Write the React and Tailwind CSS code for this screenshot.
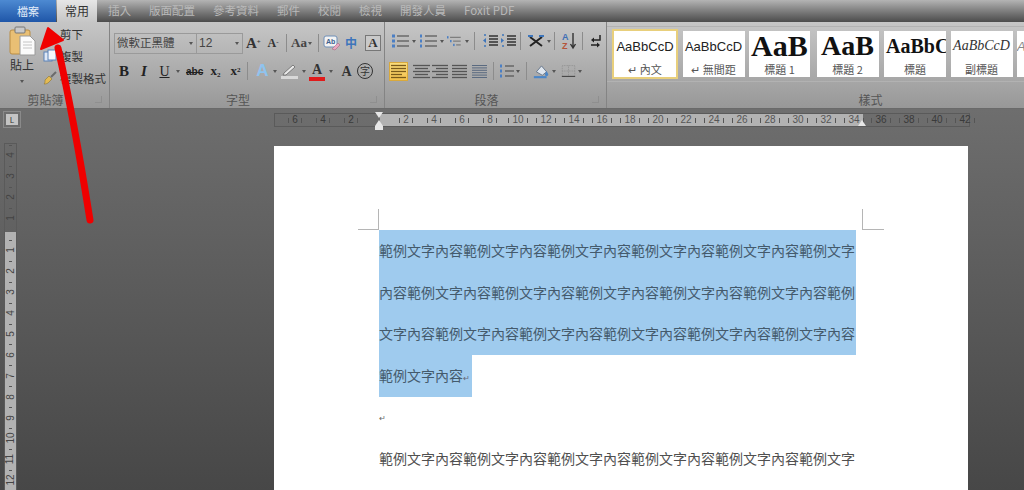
import React from 'react';

const cjk = { fontFamily: '"Noto Sans CJK TC", "Liberation Sans", sans-serif' };

const otherTabs = ['插入', '版面配置', '參考資料', '郵件', '校閱', '檢視', '開發人員', 'Foxit PDF'];
const rulerLeft = [6, 4, 2];
const rulerBody = [2, 4, 6, 8, 10, 12, 14, 16, 18, 20, 22, 24, 26, 28, 30, 32, 34];
const rulerRight = [36, 38, 40, 42];
const vRulerTop = [4, 3, 2, 1];
const vRulerBody = [1, 2, 3, 4, 5, 6, 7, 8, 9, 10, 11, 12];

const pageLines = [
  '範例文字內容範例文字內容範例文字內容範例文字內容範例文字內容範例文字',
  '內容範例文字內容範例文字內容範例文字內容範例文字內容範例文字內容範例',
  '文字內容範例文字內容範例文字內容範例文字內容範例文字內容範例文字內容',
];

// small drop arrow used by most ribbon buttons
const Drop = () => <span className="block w-0 h-0 border-x-[2px] border-x-transparent border-t-[3px] border-t-[#555] shrink-0" />;
const Sep = () => <span className="block w-px h-[18px] bg-[#8c8c8c] shrink-0" />;

// text lines icon: rows = [[x1, x2], ...]
const Lines = ({ w = 18, rows, color = '#444', stroke = 1.4 }) => (
  <svg width={w} height="15" viewBox={`0 0 ${w} 15`} className="shrink-0">
    {rows.map((r, i) => (
      <line key={i} x1={r[0]} x2={r[1]} y1={1.5 + i * (12 / (rows.length - 1))} y2={1.5 + i * (12 / (rows.length - 1))} stroke={color} strokeWidth={stroke} />
    ))}
  </svg>
);

const ListIcon = ({ w = 18, numbered }) => (
  <svg width={w} height="16" viewBox={`0 0 ${w} 16`} className="shrink-0">
    {[3, 8, 13].map((y) => (
      <g key={y}>
        <rect x="1" y={y - 1.5} width={numbered ? 2 : 3} height="3" fill="#4b7fc4" />
        <line x1="6" x2={w} y1={y} y2={y} stroke="#555" strokeWidth="1.2" />
      </g>
    ))}
  </svg>
);

const PasteIcon = () => (
  <svg width="27" height="30" viewBox="0 0 27 30" className="shrink-0">
    <rect x="1" y="4" width="20" height="24" rx="2" fill="#e9bf74" stroke="#b98d45" />
    <rect x="6" y="1" width="10" height="6" rx="1" fill="#c9c9c9" stroke="#777" />
    <path d="M11 10h10l5 5v14H11z" fill="#fbfbfb" stroke="#9a9a9a" />
    <path d="M14 16h9M14 19h9M14 22h9" stroke="#c4c4c4" />
  </svg>
);

const CopyIcon = () => (
  <svg width="14" height="14" viewBox="0 0 14 14" className="shrink-0">
    <rect x="1" y="3" width="8" height="9" fill="#dfe8f5" stroke="#5a82b8" />
    <rect x="5" y="1" width="8" height="10" fill="#f3f6fb" stroke="#5a82b8" />
  </svg>
);

const BrushIcon = () => (
  <svg width="14" height="14" viewBox="0 0 14 14" className="shrink-0">
    <path d="M8 6l5-5" stroke="#6b6b6b" strokeWidth="2" />
    <path d="M2 9l4-4 3 3-4 4c-2 1-3 1-4 1 1-1 1-2 1-4z" fill="#e4bb54" stroke="#8c7330" strokeWidth="0.6" />
  </svg>
);

const ShadingIcon = () => (
  <svg width="17" height="18" viewBox="0 0 20 18" className="shrink-0">
    <path d="M4 10l6-7 6 7-5 4z" fill="#dfe6ee" stroke="#5d6f86" />
    <path d="M16 9c1 2 2 3 2 4a2 2 0 0 1-4 0c0-1 1-2 2-4z" fill="#4a86c8" />
    <rect x="1" y="15" width="15" height="2.5" fill="#4a86c8" />
  </svg>
);

const BorderIcon = () => (
  <svg width="15" height="16" viewBox="0 0 18 16" className="shrink-0">
    <path d="M1.5 1.5h15v13h-15zM9 1.5v13M1.5 8h15" fill="none" stroke="#8d8d8d" strokeDasharray="1 1" />
    <path d="M1 14.5h16" stroke="#444" strokeWidth="1.3" />
  </svg>
);

const SortIcon = () => (
  <svg width="16" height="20" viewBox="0 0 16 20" className="shrink-0">
    <text x="1" y="9" fontSize="9" fontWeight="700" fill="#3f6fb5" fontFamily="Liberation Sans, sans-serif">A</text>
    <text x="1" y="18" fontSize="9" fontWeight="700" fill="#b5553a" fontFamily="Liberation Sans, sans-serif">Z</text>
    <path d="M12 2v14M9.5 13l2.5 4 2.5-4" fill="none" stroke="#333" strokeWidth="1.4" />
  </svg>
);

const MarksIcon = () => (
  <svg width="12" height="16" viewBox="0 0 12 16" className="shrink-0">
    <path d="M10 2v5H3" fill="none" stroke="#222" strokeWidth="1.5" />
    <path d="M4 4.5L1 7l3 2.5z" fill="#222" />
    <path d="M1 12h8" stroke="#222" strokeWidth="1.5" />
    <path d="M7 9.5l3 2.5-3 2.5z" fill="#222" />
  </svg>
);

const AsianIcon = () => (
  <svg width="20" height="16" viewBox="0 0 20 16" className="shrink-0">
    <path d="M4 4l12 9M16 4L4 13" stroke="#222" strokeWidth="2" />
    <path d="M2 3h5M13 3h5" stroke="#3d75bb" strokeWidth="2" />
  </svg>
);

const IndentIcon = ({ flip }) => (
  <svg width="15" height="14" viewBox="0 0 15 14" className="shrink-0">
    <path d="M6 2h9M6 5h9M6 8h9M6 11h9" stroke="#333" strokeWidth="1.4" />
    <path d={flip ? 'M0 6.5l3-2.5v5z' : 'M3 6.5L0 4v5z'} fill="#3d75bb" />
    <path d="M1 1h2M1 12h2" stroke="#3d75bb" strokeWidth="1.4" />
  </svg>
);

const MultiIcon = () => (
  <svg width="16" height="13" viewBox="0 0 21 16" className="shrink-0">
    <rect x="0" y="1" width="2" height="3" fill="#4b7fc4" />
    <path d="M4 2.5h14" stroke="#555" />
    <rect x="4" y="6" width="2" height="3" fill="#4b7fc4" />
    <path d="M8 7.5h10" stroke="#555" />
    <rect x="8" y="11" width="2" height="3" fill="#4b7fc4" />
    <path d="M12 12.5h6" stroke="#555" />
  </svg>
);

const ClearIcon = () => (
  <svg width="18" height="16" viewBox="0 0 18 16" className="shrink-0">
    <rect x="1" y="1" width="13" height="11" rx="2" fill="#f2f2f2" stroke="#6f8fb8" />
    <text x="3" y="9" fontSize="7" fontWeight="700" fill="#3d5f8f" fontFamily="Liberation Sans, sans-serif">Ab</text>
    <path d="M9 14l6-6 2 2-5 5z" fill="#e9a6c0" stroke="#a56a84" strokeWidth="0.6" />
  </svg>
);

const HighlightIcon = () => (
  <svg width="17" height="16" viewBox="0 0 17 16" className="shrink-0">
    <path d="M3 10l9-8 2 2-9 8-3 0z" fill="#e8e8e8" stroke="#666" strokeWidth="0.8" />
    <rect x="0" y="13" width="17" height="3" fill="#d8d8d8" />
  </svg>
);

const CircledIcon = () => (
  <span className="block w-[16px] h-[16px] rounded-full border border-[#333] text-[10px] leading-[14px] text-center text-[#333] shrink-0" style={cjk}>字</span>
);

const StyleTile = ({ label, sample, className, sampleClass, style }) => (
  <div className={`flex flex-col items-center overflow-hidden bg-white shrink-0 ${className}`}>
    <div className={`h-[30px] w-full flex items-center justify-center whitespace-nowrap overflow-hidden leading-none ${sampleClass}`} style={style}>{sample}</div>
    <div className="text-[11px] leading-[16px] text-[#555] whitespace-nowrap" style={cjk}>{label}</div>
  </div>
);

const GroupLabel = ({ children, launcher = true, className = 'pr-[18px]' }) => (
  <div className={`h-[16px] relative flex items-center justify-center text-[12px] text-[#555] ${className}`} style={cjk}>
    {children}
    {launcher && <span className="absolute right-[7px] top-[4px] w-[7px] h-[7px] border border-[#8f8f8f] border-t-0 border-l-0" />}
  </div>
);

const HTick = ({ n, light }) => (
  <div className={`w-[28px] shrink-0 flex items-center justify-center gap-[3px] text-[10px] leading-none ${light ? 'text-[#555]' : 'text-[#3a3a3a]'}`} style={{ fontFamily: '"Liberation Sans", sans-serif' }}>
    <span className="w-px h-[5px] bg-[#555]" />
    <span>{n}</span>
    <span className="w-px h-[5px] bg-[#555]" />
  </div>
);

const VTick = ({ n }) => (
  <div className="h-[20.9px] shrink-0 flex flex-col items-center justify-between text-[10px] leading-none text-[#444]" style={{ fontFamily: '"Liberation Sans", sans-serif' }}>
    <span className="w-[3px] h-px bg-[#555]" />
    <span className="-rotate-90">{n}</span>
    <span className="h-px" />
  </div>
);

const App = () => {
  return (
    <div className="w-[1024px] h-[490px] overflow-hidden relative bg-[#5a5a5a]" style={cjk}>
      {/* tab strip */}
      <div className="h-[22px] flex bg-gradient-to-b from-[#b4b4b4] to-[#4c4c4c]">
        <div className="w-[56px] h-[22px] flex items-center justify-center text-[11px] text-[#e4eefa] bg-gradient-to-b from-[#4d8ad2] to-[#1f56a8]">檔案</div>
        <div className="w-[40px] h-[22px] ml-px flex items-center justify-center text-[12px] text-[#333] bg-gradient-to-b from-[#e6e6e6] to-[#c6c6c6]">常用</div>
        <div className="flex items-center gap-[18px] ml-[11px] text-[11.5px] text-[#b9b9b9]">
          {otherTabs.map((t) => <span key={t} className="whitespace-nowrap">{t}</span>)}
        </div>
      </div>

      {/* ribbon */}
      <div className="h-[87px] flex bg-gradient-to-b from-[#c6c6c6] to-[#989898] border-b border-[#6a6a6a]">
        {/* clipboard */}
        <div className="w-[110px] shrink-0 border-r border-[#848484] flex flex-col">
          <div className="h-[70px] flex">
            <div className="w-[43px] shrink-0 flex flex-col items-center pt-[4px] pl-[1px]">
              <PasteIcon />
              <div className="text-[12px] leading-[14px] mt-[2px] text-[#333]">貼上</div>
              <div className="mt-[8px]"><Drop /></div>
            </div>
            <div className="flex flex-col pt-[1px] text-[11.5px] text-[#333] leading-[22px] whitespace-nowrap">
              <div className="flex items-center gap-[3px] h-[22px]"><span className="w-[14px]" /><span>剪下</span></div>
              <div className="flex items-center gap-[3px] h-[22px]"><CopyIcon /><span>複製</span></div>
              <div className="flex items-center gap-[3px] h-[22px]"><BrushIcon /><span>複製格式</span></div>
            </div>
          </div>
          <GroupLabel>剪貼簿</GroupLabel>
        </div>

        {/* font */}
        <div className="w-[275px] shrink-0 border-r border-[#848484] flex flex-col">
          <div className="h-[70px] pl-[4px] flex flex-col">
            <div className="h-[22px] mt-[10px] flex items-center">
              <div className="w-[83px] h-[21px] border border-[#9a9a9a] flex items-center justify-between pl-[2px] pr-[3px] text-[11.5px] text-[#444]">微軟正黑體<Drop /></div>
              <div className="w-[46px] h-[21px] border border-l-0 border-[#9a9a9a] flex items-center justify-between pl-[2px] pr-[3px] text-[12px] text-[#444]" style={{ fontFamily: '"Liberation Sans", sans-serif' }}>12<Drop /></div>
              <div className="ml-[3px] flex items-center text-[#333] font-bold" style={{ fontFamily: '"Liberation Serif", serif' }}>
                <span className="w-[14px] text-[15px] text-center">A<sup className="text-[7px]">+</sup></span>
                <span className="w-[14px] ml-[6px] text-[12px] text-center">A<sup className="text-[7px]">-</sup></span>
              </div>
              <span className="ml-[6px]"><Sep /></span>
              <span className="ml-[4px] w-[14px] text-[13px] font-bold text-[#444]" style={{ fontFamily: '"Liberation Serif", serif' }}>Aa</span>
              <span className="ml-[3px]"><Drop /></span>
              <span className="ml-[6px]"><Sep /></span>
              <span className="ml-[4px]"><ClearIcon /></span>
              <span className="ml-[4px] w-[16px] text-[12px] font-bold text-[#3d75bb] whitespace-nowrap overflow-hidden">中</span>
              <span className="ml-[4px] w-[16px] h-[16px] border border-[#777] bg-[#c9c9c9] text-[13px] leading-[14px] font-bold text-center text-[#333]" style={{ fontFamily: '"Liberation Serif", serif' }}>A</span>
            </div>
            <div className="h-[20px] mt-[7px] flex items-center pl-[4px] text-[#222]" style={{ fontFamily: '"Liberation Serif", serif' }}>
              <span className="w-[12px] text-[15px] font-bold text-center">B</span>
              <span className="w-[8px] ml-[10px] text-[15px] italic font-bold text-center">I</span>
              <span className="w-[11px] ml-[11px] text-[14px] underline text-center">U</span>
              <span className="ml-[6px]"><Drop /></span>
              <span className="ml-[6px] w-[15px] text-[10px] font-bold line-through text-center" style={{ fontFamily: '"Liberation Sans", sans-serif' }}>abc</span>
              <span className="ml-[7px] w-[15px] text-[13px] font-bold text-center">x<sub className="text-[7px]">2</sub></span>
              <span className="ml-[5px] w-[15px] text-[13px] font-bold text-center">x<sup className="text-[7px]">2</sup></span>
              <span className="ml-[4px]"><Sep /></span>
              <span className="ml-[7px] w-[15px] text-[17px] font-bold text-[#8fc3ee] text-center" style={{ fontFamily: '"Liberation Sans", sans-serif' }}>A</span>
              <span className="ml-[3px]"><Drop /></span>
              <span className="ml-[4px]"><HighlightIcon /></span>
              <span className="ml-[4px]"><Drop /></span>
              <span className="ml-[3px] w-[16px] h-[19px] flex flex-col items-center text-[14px] leading-[15px] font-bold text-[#333]">A<span className="block w-[16px] h-[4px] bg-[#e01b1b]" /></span>
              <span className="ml-[4px]"><Drop /></span>
              <span className="ml-[7px] w-[13px] text-[14px] font-bold text-center text-[#333]">A</span>
              <span className="ml-[4px]"><CircledIcon /></span>
            </div>
          </div>
          <GroupLabel>字型</GroupLabel>
        </div>

        {/* paragraph */}
        <div className="w-[222px] shrink-0 border-r border-[#848484] flex flex-col">
          <div className="h-[70px] flex flex-col pl-[5px]">
            <div className="h-[20px] mt-[9px] flex items-center">
              <span className="ml-[1px]"><ListIcon /></span>
              <span className="ml-[3px]"><Drop /></span>
              <span className="ml-[3px]"><ListIcon numbered /></span>
              <span className="ml-[3px]"><Drop /></span>
              <span className="ml-[3px]"><MultiIcon /></span>
              <span className="ml-[2px]"><Drop /></span>
              <span className="ml-[5px]"><Sep /></span>
              <span className="ml-[8px]"><IndentIcon flip /></span>
              <span className="ml-[3px]"><IndentIcon /></span>
              <span className="ml-[4px]"><Sep /></span>
              <span className="ml-[5px]"><AsianIcon /></span>
              <span className="ml-[1px]"><Drop /></span>
              <span className="ml-[3px]"><Sep /></span>
              <span className="ml-[6px]"><SortIcon /></span>
              <span className="ml-[5px]"><Sep /></span>
              <span className="ml-[7px]"><MarksIcon /></span>
            </div>
            <div className="h-[20px] mt-[10px] flex items-center -ml-[1px]">
              <span className="w-[19px] h-[19px] bg-gradient-to-b from-[#f9dd7c] to-[#f4c24d] border border-[#d9a93c] flex items-center justify-center"><Lines w={15} rows={[[0, 15], [0, 15], [0, 15], [0, 11], [0, 15]]} color="#7a5b1c" stroke={1.3} /></span>
              <span className="ml-[5px]"><Lines w={17} rows={[[0, 17], [2, 15], [0, 17], [2, 15], [0, 17]]} color="#555" stroke={1.3} /></span>
              <span className="ml-[2px]"><Lines w={16} rows={[[0, 16], [4, 16], [0, 16], [4, 16], [0, 16]]} color="#555" stroke={1.3} /></span>
              <span className="ml-[4px]"><Lines w={15} rows={[[0, 15], [0, 15], [0, 15], [0, 15], [0, 15]]} color="#555" stroke={1.3} /></span>
              <span className="ml-[5px]"><Lines w={15} rows={[[0, 15], [0, 15], [0, 15], [0, 15], [0, 15], [0, 15]]} color="#5a6a80" stroke={1} /></span>
              <span className="ml-[6px]"><Sep /></span>
              <span className="ml-[5px]"><ListIcon w={15} numbered /></span>
              <span className="ml-[2px]"><Drop /></span>
              <span className="ml-[6px]"><Sep /></span>
              <span className="ml-[6px]"><ShadingIcon /></span>
              <span className="ml-[2px]"><Drop /></span>
              <span className="ml-[5px]"><BorderIcon /></span>
              <span className="ml-[2px]"><Drop /></span>
            </div>
          </div>
          <GroupLabel>段落</GroupLabel>
        </div>

        {/* styles */}
        <div className="flex-1 flex flex-col min-w-0">
          <div className="h-[70px] overflow-hidden">
            <div className="h-[56px] mt-[4px] pl-[5px] flex items-center gap-[4.5px] border-y border-[#b2b2b2]">
              <StyleTile label="↵ 內文" sample="AaBbCcD" className="w-[66px] h-[50px] border-2 border-[#e8cf7c]" sampleClass="text-[13px] text-[#222]" style={{ fontFamily: '"Liberation Sans", sans-serif' }} />
              <StyleTile label="↵ 無間距" sample="AaBbCcD" className="w-[62px] h-[46px]" sampleClass="text-[13px] text-[#222]" style={{ fontFamily: '"Liberation Sans", sans-serif' }} />
              <StyleTile label="標題 1" sample="AaB" className="w-[61px] h-[46px]" sampleClass="text-[30px] font-bold text-[#111] justify-start pl-[2px]" style={{ fontFamily: '"Liberation Serif", serif' }} />
              <StyleTile label="標題 2" sample="AaB" className="w-[62px] h-[46px] ml-[2px]" sampleClass="text-[28px] font-bold text-[#111]" style={{ fontFamily: '"Liberation Serif", serif' }} />
              <StyleTile label="標題" sample="AaBbC" className="w-[62px] h-[46px] ml-[1px]" sampleClass="text-[20px] font-bold text-[#111] justify-start pl-[2px]" style={{ fontFamily: '"Liberation Serif", serif' }} />
              <StyleTile label="副標題" sample="AaBbCcD" className="w-[62px] h-[46px]" sampleClass="text-[14px] italic text-[#333]" style={{ fontFamily: '"Liberation Serif", serif' }} />
              <StyleTile label="" sample="AaBbCcD" className="w-[62px] h-[46px]" sampleClass="text-[13px] italic text-[#888] justify-start" style={{ fontFamily: '"Liberation Sans", sans-serif' }} />
            </div>
          </div>
          <GroupLabel launcher={false} className="pl-[110px]">樣式</GroupLabel>
        </div>
      </div>

      {/* document area */}
      <div className="h-[381px] flex bg-gradient-to-b from-[#6e6e6e] to-[#474747] overflow-hidden">
        <div className="w-[274px] shrink-0 pl-[3px] pt-[2px]">
          <div className="w-[18px] h-[17px] border border-[#8a8a8a] flex items-center justify-center">
            <div className="w-[12px] h-[11px] bg-[#c4c4c4] text-[8px] leading-[11px] text-center text-[#333]">L</div>
          </div>
          <div className="w-[13px] ml-[1px] mt-[15px] flex flex-col items-center border border-[#5a5a5a]">
            <div className="w-full h-[88px] flex flex-col items-center overflow-hidden pt-[1px]">
              {vRulerTop.map((n) => <VTick key={n} n={n} />)}
            </div>
            <div className="w-full bg-[#b2b2b2] flex flex-col items-center pt-[8px]">
              {vRulerBody.map((n) => <VTick key={n} n={n} />)}
            </div>
          </div>
        </div>

        <div className="w-[694px] shrink-0">
          {/* horizontal ruler */}
          <div className="h-[14px] w-[696px] mt-[4px] flex border border-[#5a5a5a] relative">
            <div className="w-[105px] shrink-0 flex justify-end items-center pr-[15px]">
              {rulerLeft.map((n) => <HTick key={n} n={n} />)}
            </div>
            <div className="w-[483px] shrink-0 bg-[#b2b2b2] flex items-center pl-[12px]">
              {rulerBody.map((n) => <HTick key={n} n={n} light />)}
            </div>
            <div className="flex-1 flex items-center pl-[4px]">
              {rulerRight.map((n) => <HTick key={n} n={n} />)}
            </div>
            <span className="absolute left-[100px] -top-[2px] w-0 h-0 border-x-[4px] border-x-transparent border-t-[6px] border-t-[#e6e6e6]" />
            <span className="absolute left-[100px] top-[6px] w-0 h-0 border-x-[4px] border-x-transparent border-b-[6px] border-b-[#e6e6e6]" />
            <span className="absolute left-[100px] top-[12px] w-[8px] h-[4px] bg-[#e6e6e6]" />
            <span className="absolute left-[583px] top-[6px] w-0 h-0 border-x-[4px] border-x-transparent border-b-[6px] border-b-[#e6e6e6]" />
          </div>

          {/* page */}
          <div className="h-[344px] w-[694px] mt-[19px] bg-white relative pl-[105px] pt-[84px] overflow-hidden">
            <span className="absolute left-[84px] top-[63px] w-[21px] h-[21px] border-r border-b border-[#b5b5b5]" />
            <span className="absolute left-[588px] top-[63px] w-[22px] h-[21px] border-l border-b border-[#b5b5b5]" />
            <div className="text-[14px] leading-[41.7px] text-[#505050]">
              {pageLines.map((line) => (
                <div key={line} className="w-[477px] h-[41.7px] whitespace-nowrap overflow-hidden bg-[#9fcbee] text-[#445a6c]">{line}</div>
              ))}
              <div className="w-[93px] h-[41.7px] whitespace-nowrap bg-[#9fcbee] text-[#445a6c]">範例文字內容<span className="text-[8px] text-[#667]">↵</span></div>
              <div className="h-[41.7px] text-[8px] text-[#666]">↵</div>
              <div className="w-[477px] h-[41.7px] whitespace-nowrap overflow-hidden">{pageLines[0]}</div>
            </div>
          </div>
        </div>
      </div>

      {/* red annotation arrow */}
      <svg width="1024" height="490" viewBox="0 0 1024 490" className="absolute left-0 top-0 pointer-events-none">
        <path d="M90 220C82 170 72 110 58 48" fill="none" stroke="#f00000" strokeWidth="7" strokeLinecap="round" />
        <path d="M48 28L41 49L63 40Z" fill="#f00000" stroke="#f00000" strokeWidth="2" strokeLinejoin="round" />
      </svg>
    </div>
  );
};

export default App;
